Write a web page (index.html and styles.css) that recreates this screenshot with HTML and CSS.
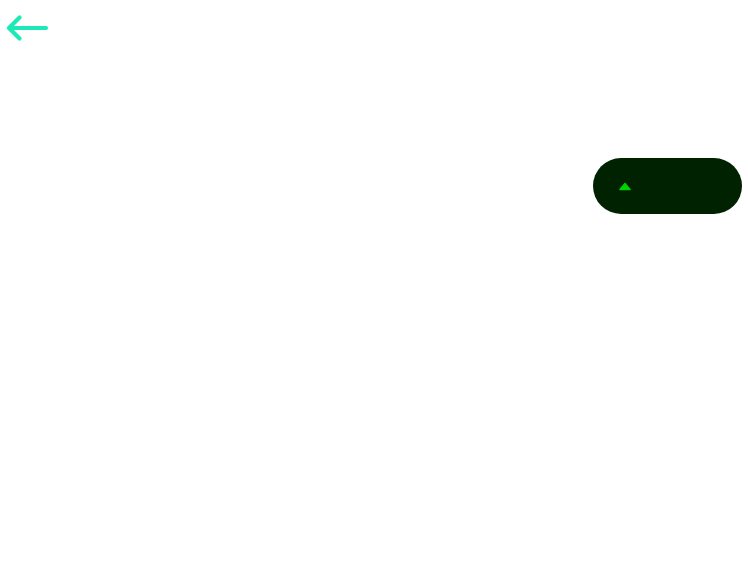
FILE: index.html
```html
<!DOCTYPE html>
<html>
<head>
<meta charset="utf-8">
<link rel="stylesheet" href="styles.css">
</head>
<body>
<div class="top">
  <svg class="back" width="44" height="28" viewBox="0 0 44 28">
    <path d="M3 14 H40 M13.5 3.5 L3 14 L13.5 24.5" fill="none" stroke="#1de9b6" stroke-width="4.2" stroke-linecap="round" stroke-linejoin="round"/>
  </svg>
</div>
<div class="row">
  <div class="pill">
    <svg width="12" height="9" viewBox="0 0 12 9">
      <path d="M6 1.5 L11 7.5 H1 Z" fill="#00d000" stroke="#00d000" stroke-width="1.5" stroke-linejoin="round"/>
    </svg>
  </div>
</div>
</body>
</html>
```
FILE: styles.css
```css
html, body {
  margin: 0;
  background: #ffffff;
  font-family: "Liberation Sans", Arial, sans-serif;
}
.top {
  padding: 14px 0 0 6px;
  height: 28px;
}
.back {
  display: block;
}
.row {
  display: flex;
  justify-content: flex-end;
  padding-right: 6px;
  margin-top: 116px;
}
.pill {
  width: 149px;
  height: 56px;
  border-radius: 28px;
  background: #002200;
  display: flex;
  align-items: center;
  padding-left: 26px;
  box-sizing: border-box;
}
.pill svg {
  display: block;
}
```
